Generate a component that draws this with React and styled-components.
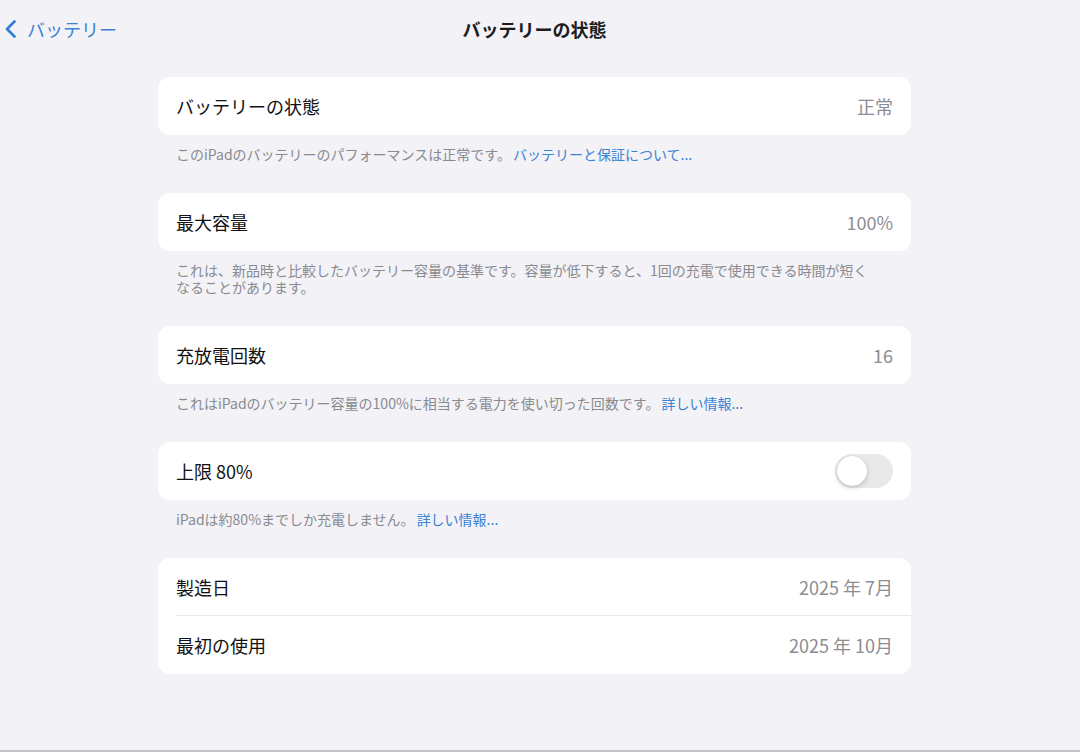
import styled, { createGlobalStyle } from 'styled-components';

const GlobalStyle = createGlobalStyle`
  html, body {
    margin: 0;
    padding: 0;
    background: #f2f2f7;
  }
  body {
    font-family: "Noto Sans CJK JP", "Noto Sans", sans-serif;
    -webkit-font-smoothing: antialiased;
  }
`;

const Chevron = () => (
  <svg width="14" height="20" viewBox="0 0 14 20">
    <path
      d="M10.5 2.5 L3 10 L10.5 17.5"
      fill="none"
      stroke="#2f7bd6"
      strokeWidth="2.6"
      strokeLinecap="round"
      strokeLinejoin="round"
    />
  </svg>
);

const App = () => {
  return (
    <Page>
      <GlobalStyle />
      <NavBar>
        <BackButton>
          <Chevron />
          バッテリー
        </BackButton>
        <Title>バッテリーの状態</Title>
      </NavBar>

      <Content>
        <Section>
          <Card>
            <Row>
              <Label>バッテリーの状態</Label>
              <Value>正常</Value>
            </Row>
          </Card>
          <Footer>
            このiPadのバッテリーのパフォーマンスは正常です。
            <Link>バッテリーと保証について...</Link>
          </Footer>
        </Section>

        <Section>
          <Card>
            <Row>
              <Label>最大容量</Label>
              <Value>100%</Value>
            </Row>
          </Card>
          <Footer $narrow>
            これは、新品時と比較したバッテリー容量の基準です。容量が低下すると、1回の充電で使用できる時間が短くなることがあります。
          </Footer>
        </Section>

        <Section>
          <Card>
            <Row>
              <Label>充放電回数</Label>
              <Value>16</Value>
            </Row>
          </Card>
          <Footer>
            これはiPadのバッテリー容量の100%に相当する電力を使い切った回数です。
            <Link>詳しい情報...</Link>
          </Footer>
        </Section>

        <Section>
          <Card>
            <Row>
              <Label>上限 80%</Label>
              <Toggle>
                <Knob />
              </Toggle>
            </Row>
          </Card>
          <Footer>
            iPadは約80%までしか充電しません。
            <Link>詳しい情報...</Link>
          </Footer>
        </Section>

        <Section>
          <Card>
            <Row $divider>
              <Label>製造日</Label>
              <Value>2025 年 7月</Value>
            </Row>
            <Row>
              <Label>最初の使用</Label>
              <Value>2025 年 10月</Value>
            </Row>
          </Card>
        </Section>
      </Content>
      <BottomLine />
    </Page>
  );
};

export default App;

const Page = styled.div`
  width: 1080px;
  height: 752px;
  background: #f2f2f7;
  display: flex;
  flex-direction: column;
  overflow: hidden;
  position: relative;
`;

const NavBar = styled.div`
  height: 58px;
  display: flex;
  align-items: center;
  justify-content: center;
  position: relative;
  flex-shrink: 0;
`;

const BackButton = styled.div`
  position: absolute;
  left: 4px;
  top: 18px;
  display: flex;
  align-items: center;
  gap: 9px;
  color: #3b82d2;
  font-size: 18px;
  line-height: 22px;
`;

const Title = styled.div`
  font-size: 18px;
  font-weight: 700;
  color: #1c1c1e;
  margin-right: 11px;
`;

const Content = styled.div`
  width: 753px;
  margin: 19px 0 0 158px;
  display: flex;
  flex-direction: column;
`;

const Section = styled.div`
  display: flex;
  flex-direction: column;
  margin-bottom: 30px;
`;

const Card = styled.div`
  background: #ffffff;
  border-radius: 12px;
  overflow: hidden;
`;

const Row = styled.div`
  height: 58px;
  display: flex;
  align-items: center;
  justify-content: space-between;
  padding: 0 18px;
  position: relative;

  &::after {
    content: '';
    display: ${(p) => (p.$divider ? 'block' : 'none')};
    position: absolute;
    left: 18px;
    right: 0;
    bottom: 0;
    height: 1px;
    background: #e6e6eb;
  }
`;

const Label = styled.div`
  font-size: 18px;
  font-weight: 400;
  color: #111113;
`;

const Value = styled.div`
  font-size: 18px;
  color: #8c8c91;
`;

const Footer = styled.div`
  margin-top: 11px;
  padding: 0 ${(p) => (p.$narrow ? '34px' : '18px')} 0 18px;
  font-size: 14px;
  line-height: 17px;
  color: #8a8a8f;
`;

const Link = styled.span`
  color: #3b82d2;
  margin-left: 2px;
`;

const Toggle = styled.div`
  width: 58px;
  height: 34px;
  border-radius: 17px;
  background: #e9e9eb;
  padding: 2px;
  box-sizing: border-box;
  display: flex;
  align-items: center;
`;

const Knob = styled.div`
  width: 30px;
  height: 30px;
  border-radius: 50%;
  background: #ffffff;
  box-shadow: 0 2px 5px rgba(0, 0, 0, 0.18), 0 0 1px rgba(0, 0, 0, 0.15);
`;

const BottomLine = styled.div`
  position: absolute;
  left: 0;
  right: 0;
  bottom: 0;
  height: 2px;
  background: #c4c4c8;
`;
